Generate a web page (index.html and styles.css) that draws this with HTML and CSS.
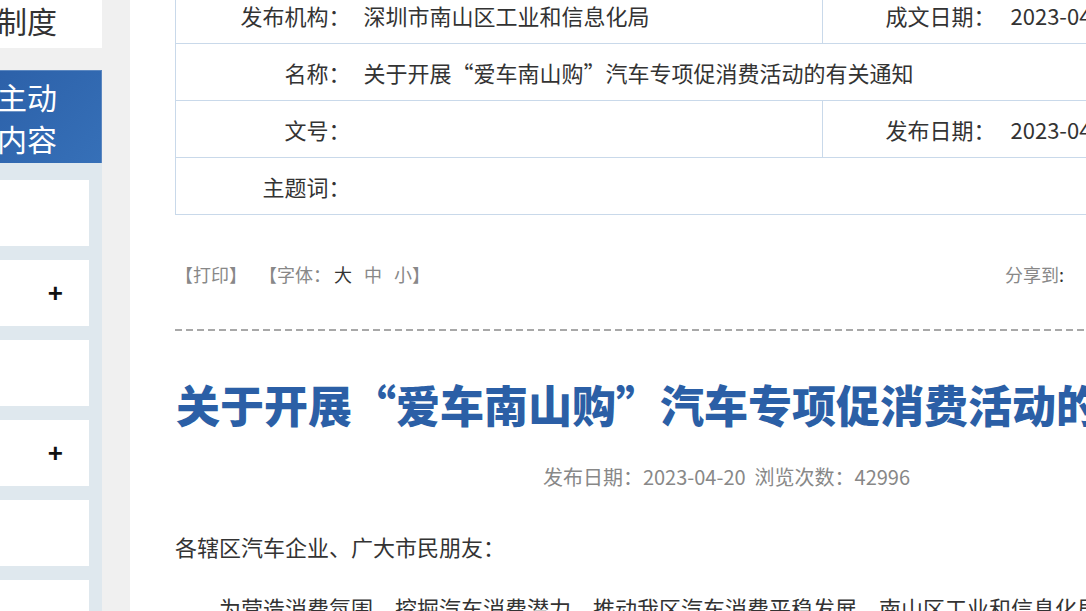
FILE: index.html
```html
<!DOCTYPE html>
<html lang="zh-CN">
<head>
<meta charset="utf-8">
<title>关于开展“爱车南山购”汽车专项促消费活动的有关通知</title>
<link rel="stylesheet" href="styles.css">
</head>
<body>
<div class="page">
  <aside class="sidebar">
    <div class="side-title">公开制度</div>
    <div class="side-active">信息主动<br>公开内容</div>
    <ul class="side-list">
      <li class="side-item"></li>
      <li class="side-item"><span class="plus">+</span></li>
      <li class="side-item"></li>
      <li class="side-item"><span class="plus">+</span></li>
      <li class="side-item"></li>
      <li class="side-item"></li>
    </ul>
  </aside>
  <main class="main">
    <div class="content">
      <table class="meta">
        <colgroup>
          <col class="c-label">
          <col class="c-value">
          <col class="c-label2">
          <col class="c-value2">
        </colgroup>
        <tr>
          <td class="label first">发布机构：</td>
          <td class="value split">深圳市南山区工业和信息化局</td>
          <td class="label">成文日期：</td>
          <td class="value value2">2023-04-20</td>
        </tr>
        <tr>
          <td class="label first">名称：</td>
          <td class="value" colspan="3">关于开展“爱车南山购”汽车专项促消费活动的有关通知</td>
        </tr>
        <tr>
          <td class="label first">文号：</td>
          <td class="value split"></td>
          <td class="label">发布日期：</td>
          <td class="value value2">2023-04-20</td>
        </tr>
        <tr>
          <td class="label first">主题词：</td>
          <td class="value" colspan="3"></td>
        </tr>
      </table>

      <div class="tools">
        <div class="tools-left">
          <span class="tool">【打印】</span>
          <span class="tool tool-font">【字体：<span class="size size-first active">大</span><span class="size">中</span><span class="size size-last">小</span>】</span>
        </div>
        <div class="share">
          <span class="share-label">分享到<span class="colon">:</span></span>
          <span class="share-icon"></span>
          <span class="share-icon"></span>
          <span class="share-icon"></span>
          <span class="share-icon"></span>
        </div>
      </div>

      <div class="divider"></div>

      <h1 class="title">关于开展“爱车南山购”汽车专项促消费活动的有关通知</h1>

      <div class="info">发布日期：2023-04-20&nbsp;&nbsp;浏览次数：42996</div>

      <div class="article">
        <p>各辖区汽车企业、广大市民朋友：</p>
        <p class="indent">为营造消费氛围，挖掘汽车消费潜力，推动我区汽车消费平稳发展，南山区工业和信息化局决定开展“爱车南山购”汽车专项促消费活动。</p>
      </div>
    </div>
  </main>
</div>
</body>
</html>
```

FILE: styles.css
```css
html, body {
  margin: 0;
  padding: 0;
  height: 100%;
  overflow: hidden;
}

body {
  background: #f0f0f0;
  font-family: "Noto Sans CJK SC", "Microsoft YaHei", sans-serif;
  color: #333;
}

.page {
  display: flex;
  align-items: flex-start;
  margin: -15px 0 0 -88px;
  width: 1600px;
}

/* Sidebar */
.sidebar {
  width: 190px;
  flex: none;
}

.side-title {
  height: 63px;
  box-sizing: border-box;
  padding: 17px 0 0 25px;
  background: #fff;
  font-size: 30px;
  line-height: 36px;
  color: #333;
  white-space: nowrap;
}

.side-active {
  margin-top: 22px;
  height: 93px;
  box-sizing: border-box;
  padding: 4px 0 0 25px;
  background: linear-gradient(135deg, #285aa2 0%, #3670b8 100%);
  border-top: 1px solid #5b87c0;
  border-right: 1px solid #5b87c0;
  color: #fff;
  font-size: 30px;
  line-height: 42px;
  white-space: nowrap;
}

.side-list {
  list-style: none;
  margin: 0;
  padding: 17px 13px 0 0;
  background: #dfe8ee;
  height: 520px;
}

.side-item {
  height: 66px;
  margin-bottom: 14px;
  background: #fff;
  display: flex;
  align-items: center;
  justify-content: flex-end;
  padding-right: 26px;
  box-sizing: border-box;
}

.plus {
  font-family: "Liberation Sans", Arial, sans-serif;
  font-weight: 700;
  font-size: 26px;
  line-height: 1;
  color: #111;
}

/* Main */
.main {
  flex: none;
  margin-left: 28px;
  width: 1300px;
  min-height: 700px;
  box-sizing: border-box;
  padding: 1px 0 0 45px;
  background: #fff;
}

.content {
  width: 1103px;
}

.meta {
  width: 1103px;
  border-collapse: collapse;
  table-layout: fixed;
}

.c-label { width: 175px; }
.c-value { width: 472px; }
.c-label2 { width: 173px; }
.c-value2 { width: 283px; }

.meta tr {
  height: 57px;
}

.meta td {
  border-top: 1px solid #c9d9ea;
  border-bottom: 1px solid #c9d9ea;
  border-left: none;
  border-right: none;
  font-size: 22px;
  line-height: 30px;
  color: #333;
  padding: 0;
  white-space: nowrap;
  overflow: hidden;
}

.meta td.first {
  border-left: 1px solid #c9d9ea;
}

.meta td.split {
  border-right: 1px solid #c9d9ea;
}

.meta .label {
  text-align: right;
}

.meta .value {
  padding-left: 13px;
}

.meta .value2 {
  padding-left: 15px;
}

/* Tools */
.tools {
  margin-top: 47px;
  height: 24px;
  display: flex;
  justify-content: space-between;
  align-items: center;
  font-size: 18px;
  line-height: 24px;
  color: #888;
}

.tools-left {
  display: flex;
}

.tool-font {
  margin-left: 12px;
}

.size {
  margin-right: 12px;
}

.size-first {
  margin-left: 3px;
}

.size-last {
  margin-right: 0;
}

.size.active {
  color: #333;
}

.share {
  display: flex;
  align-items: center;
  gap: 10px;
  margin-right: 50px;
}

.share-label .colon {
  color: #333;
}

.share-icon {
  width: 28px;
  height: 28px;
  border-radius: 50%;
  background: #e6e6e6;
}

.share-label {
  margin-right: 12px;
}

.divider {
  margin-top: 43px;
  height: 2px;
  background: repeating-linear-gradient(90deg, #a8a8a8 0 7px, transparent 7px 11px);
}

.title {
  margin: 45px 0 0;
  padding-left: 1px;
  font-size: 44px;
  line-height: 56px;
  font-weight: 900;
  color: #2b5fa6;
  white-space: nowrap;
}

.info {
  margin-top: 33px;
  text-align: center;
  font-size: 20px;
  line-height: 24px;
  color: #888;
}

.article {
  margin-top: 39px;
  font-size: 22px;
  line-height: 36px;
  color: #333;
}

.article p {
  margin: 0 0 25px;
  white-space: nowrap;
}

.article .indent {
  text-indent: 2em;
}
```
